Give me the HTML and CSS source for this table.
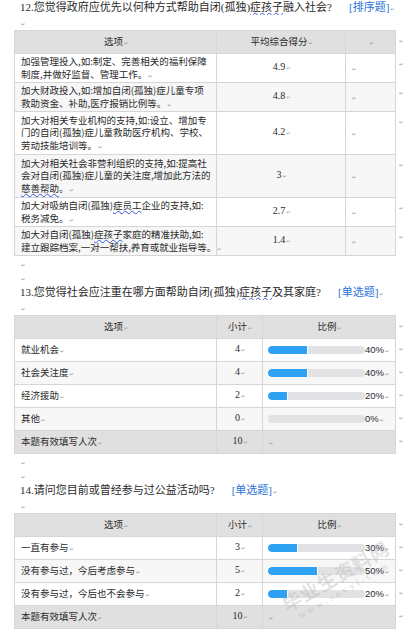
FILE: index.html
```html
<!DOCTYPE html>
<html lang="zh-CN">
<head>
<meta charset="utf-8">
<title>问卷结果</title>
<link rel="stylesheet" href="styles.css">
</head>
<body>
<div class="doc">
  <div class="p">12.您觉得政府应优先以何种方式帮助自闭(孤独)<span class="wavy">症孩子</span>融入社会?<span class="tag">[排序题]</span><span class="pm">↵</span></div>
  <div class="p"><span class="pm">↵</span></div>
  <table class="tbl t1">
    <colgroup><col class="w1"><col class="w2a"><col class="w3a"><col class="we"></colgroup>
    <tr class="row1">
      <td class="hd ctr">选项<span class="pm">↵</span></td>
      <td class="hd ctr">平均综合得分<span class="pm">↵</span></td>
      <td class="hd ctr"><span class="pm">↵</span></td>
      <td class="eor"><span class="pm">↵</span></td>
    </tr>
    <tr class="row2">
      <td class="txt">加强管理投入,如:制定、完善相关的福利保障<br>制度,并做好监督、管理工作。<span class="pm">↵</span></td>
      <td class="num ctr">4.9<span class="pm">↵</span></td>
      <td class="empty"><span class="pm">↵</span></td>
      <td class="eor"><span class="pm">↵</span></td>
    </tr>
    <tr class="row2 alt">
      <td class="txt">加大财政投入,如:增加自闭(孤独)症儿童专项<br>救助资金、补助,医疗报销比例等。<span class="pm">↵</span></td>
      <td class="num ctr">4.8<span class="pm">↵</span></td>
      <td class="empty"><span class="pm">↵</span></td>
      <td class="eor"><span class="pm">↵</span></td>
    </tr>
    <tr class="row3">
      <td class="txt">加大对相关专业机构的支持,如:设立、增加专<br>门的自闭(孤独)症儿童救助医疗机构、学校、<br>劳动技能培训等。<span class="pm">↵</span></td>
      <td class="num ctr">4.2<span class="pm">↵</span></td>
      <td class="empty"><span class="pm">↵</span></td>
      <td class="eor"><span class="pm">↵</span></td>
    </tr>
    <tr class="row3 alt">
      <td class="txt">加大对相关社会非营利组织的支持,如:提高社<br>会对自闭(孤独)症儿童的关注度,增加此方法的<br><span class="wavy">慈善帮助</span>。<span class="pm">↵</span></td>
      <td class="num ctr">3<span class="pm">↵</span></td>
      <td class="empty"><span class="pm">↵</span></td>
      <td class="eor"><span class="pm">↵</span></td>
    </tr>
    <tr class="row2">
      <td class="txt">加大对吸纳自闭(孤独)<span class="wavy">症员工</span>企业的支持,如:<br>税务减免。<span class="pm">↵</span></td>
      <td class="num ctr">2.7<span class="pm">↵</span></td>
      <td class="empty"><span class="pm">↵</span></td>
      <td class="eor"><span class="pm">↵</span></td>
    </tr>
    <tr class="row2 alt">
      <td class="txt">加大对自闭(孤独)<span class="wavy">症孩子</span>家庭的精准扶助,如:<br>建立跟踪档案,一对一帮扶,养育或就业指导等。<span class="pm">↵</span></td>
      <td class="num ctr">1.4<span class="pm">↵</span></td>
      <td class="empty"><span class="pm">↵</span></td>
      <td class="eor"><span class="pm">↵</span></td>
    </tr>
  </table>
  <div class="p"><span class="pm">↵</span></div>
  <div class="p"><span class="pm">↵</span></div>
  <div class="p">13.您觉得社会应注重在哪方面帮助自闭(孤独)<span class="wavy">症孩子</span>及其家庭?<span class="tag">[单选题]</span><span class="pm">↵</span></div>
  <div class="p"><span class="pm">↵</span></div>
  <table class="tbl t2">
    <colgroup><col class="w1"><col class="w2b"><col class="w3b"><col class="we"></colgroup>
    <tr class="row1">
      <td class="hd ctr">选项<span class="pm">↵</span></td>
      <td class="hd ctr">小计<span class="pm">↵</span></td>
      <td class="hd ctr">比例<span class="pm">↵</span></td>
      <td class="eor"><span class="pm">↵</span></td>
    </tr>
    <tr class="row1">
      <td class="txt">就业机会<span class="pm">↵</span></td>
      <td class="num ctr">4<span class="pm">↵</span></td>
      <td class="barc"><div class="bar"><span class="track"><span class="fill" style="width:40%"></span></span><span class="pct">40%<span class="pm">↵</span></span></div></td>
      <td class="eor"><span class="pm">↵</span></td>
    </tr>
    <tr class="row1 alt">
      <td class="txt">社会关注度<span class="pm">↵</span></td>
      <td class="num ctr">4<span class="pm">↵</span></td>
      <td class="barc"><div class="bar"><span class="track"><span class="fill" style="width:40%"></span></span><span class="pct">40%<span class="pm">↵</span></span></div></td>
      <td class="eor"><span class="pm">↵</span></td>
    </tr>
    <tr class="row1">
      <td class="txt">经济援助<span class="pm">↵</span></td>
      <td class="num ctr">2<span class="pm">↵</span></td>
      <td class="barc"><div class="bar"><span class="track"><span class="fill" style="width:20%"></span></span><span class="pct">20%<span class="pm">↵</span></span></div></td>
      <td class="eor"><span class="pm">↵</span></td>
    </tr>
    <tr class="row1 alt">
      <td class="txt">其他<span class="pm">↵</span></td>
      <td class="num ctr">0<span class="pm">↵</span></td>
      <td class="barc"><div class="bar"><span class="track"></span><span class="pct">0%<span class="pm">↵</span></span></div></td>
      <td class="eor"><span class="pm">↵</span></td>
    </tr>
    <tr class="row1">
      <td class="hd txt">本题有效填写人次<span class="pm">↵</span></td>
      <td class="hd num ctr">10<span class="pm">↵</span></td>
      <td class="hd barc"><span class="pm">↵</span></td>
      <td class="eor"><span class="pm">↵</span></td>
    </tr>
  </table>
  <div class="p"><span class="pm">↵</span></div>
  <div class="p"><span class="pm">↵</span></div>
  <div class="p">14.请问您目前或曾经参与过公益活动吗?<span class="tag">[单选题]</span><span class="pm">↵</span></div>
  <div class="p"><span class="pm">↵</span></div>
  <table class="tbl t2">
    <colgroup><col class="w1"><col class="w2b"><col class="w3b"><col class="we"></colgroup>
    <tr class="row1">
      <td class="hd ctr">选项<span class="pm">↵</span></td>
      <td class="hd ctr">小计<span class="pm">↵</span></td>
      <td class="hd ctr">比例<span class="pm">↵</span></td>
      <td class="eor"><span class="pm">↵</span></td>
    </tr>
    <tr class="row1">
      <td class="txt">一直有参与<span class="pm">↵</span></td>
      <td class="num ctr">3<span class="pm">↵</span></td>
      <td class="barc"><div class="bar"><span class="track"><span class="fill" style="width:30%"></span></span><span class="pct">30%<span class="pm">↵</span></span></div></td>
      <td class="eor"><span class="pm">↵</span></td>
    </tr>
    <tr class="row1 alt">
      <td class="txt">没有参与过，今后考虑参与<span class="pm">↵</span></td>
      <td class="num ctr">5<span class="pm">↵</span></td>
      <td class="barc"><div class="bar"><span class="track"><span class="fill" style="width:50%"></span></span><span class="pct">50%<span class="pm">↵</span></span></div></td>
      <td class="eor"><span class="pm">↵</span></td>
    </tr>
    <tr class="row1">
      <td class="txt">没有参与过，今后也不会参与<span class="pm">↵</span></td>
      <td class="num ctr">2<span class="pm">↵</span></td>
      <td class="barc"><div class="bar"><span class="track"><span class="fill" style="width:20%"></span></span><span class="pct">20%<span class="pm">↵</span></span></div></td>
      <td class="eor"><span class="pm">↵</span></td>
    </tr>
    <tr class="row1">
      <td class="hd txt">本题有效填写人次<span class="pm">↵</span></td>
      <td class="hd num ctr">10<span class="pm">↵</span></td>
      <td class="hd barc"><span class="pm">↵</span></td>
      <td class="eor"><span class="pm">↵</span></td>
    </tr>
  </table>
</div>
<div class="watermark"><div class="wm1">毕业生资料网</div><div class="wm2">www.sovyi.com</div></div>
</body>
</html>
```

FILE: styles.css
```css
html, body {
  margin: 0;
  padding: 0;
  background: #fff;
}
body {
  font-family: "Liberation Serif", "Noto Sans CJK SC", serif;
  color: #2a2a2a;
  width: 414px;
  height: 631px;
  overflow: hidden;
  position: relative;
}
.doc {
  padding-left: 14px;
}
.p {
  padding-left: 6px;
  height: 14.75px;
  line-height: 14.75px;
  font-size: 11px;
  white-space: nowrap;
  overflow: hidden;
}
.tag {
  color: #2a72d8;
  margin-left: 17px;
}
.pm {
  font-family: "DejaVu Sans", sans-serif;
  font-size: 5px;
  line-height: 0;
  color: #9a9a9a;
  margin-left: 1px;
}
.wavy {
  text-decoration: underline wavy #3a55d8;
  text-decoration-thickness: 1px;
  text-underline-offset: 1px;
}
.tbl {
  border-collapse: collapse;
  table-layout: fixed;
  width: 395px;
  font-family: "Noto Sans CJK SC", sans-serif;
  font-size: 9.5px;
}
.w1 { width: 202px; }
.w2a { width: 129px; }
.w3a { width: 50px; }
.w2b { width: 46px; }
.w3b { width: 133px; }
.we { width: 14px; }
.row1 { height: 23px; }
.row2 { height: 29px; }
.row3 { height: 43px; }
.tbl td {
  border: 1px solid #d6d6d6;
  padding: 0 5px 0 6px;
  line-height: 12.4px;
  vertical-align: middle;
  white-space: nowrap;
  background: #fff;
}
.tbl tr.alt td {
  background: #f7f7f7;
}
.tbl td.hd {
  background: #e0e0e0;
}
.tbl td.ctr {
  text-align: center;
}
.tbl td.num {
  font-family: "Liberation Serif", serif;
  font-size: 10px;
}
.tbl td.empty {
  padding-left: 5px;
}
.tbl td.eor {
  border: none;
  background: transparent;
  padding: 5px 0 0 2px;
  vertical-align: top;
  line-height: 8px;
}
.tbl tr.alt td.eor {
  background: transparent;
}
.tbl td.barc {
  padding-left: 5px;
  padding-right: 0;
}
.bar {
  display: flex;
  align-items: center;
  height: 12px;
}
.track {
  display: block;
  width: 97px;
  height: 8px;
  border-radius: 4px;
  background: #e2e2e4;
  overflow: hidden;
  flex: none;
}
.fill {
  display: block;
  height: 8px;
  background: #2ea2f2;
  border-right: 1px solid #fff;
  border-radius: 4px 0 0 4px;
}
.pct {
  font-family: "Liberation Sans", sans-serif;
  font-size: 9.5px;
  line-height: 12px;
  color: #2a2a2a;
}
.watermark {
  position: absolute;
  left: 278px;
  top: 596px;
  transform: rotate(-30deg);
  transform-origin: left top;
  color: rgba(175, 175, 175, 0.35);
  pointer-events: none;
  text-align: center;
}
.wm1 {
  font-family: "Noto Sans CJK SC", sans-serif;
  font-weight: 700;
  font-size: 19px;
  letter-spacing: 1px;
  line-height: 22px;
}
.wm2 {
  font-family: "Liberation Serif", serif;
  font-weight: 700;
  font-size: 10px;
  letter-spacing: 3px;
  line-height: 12px;
}
```
